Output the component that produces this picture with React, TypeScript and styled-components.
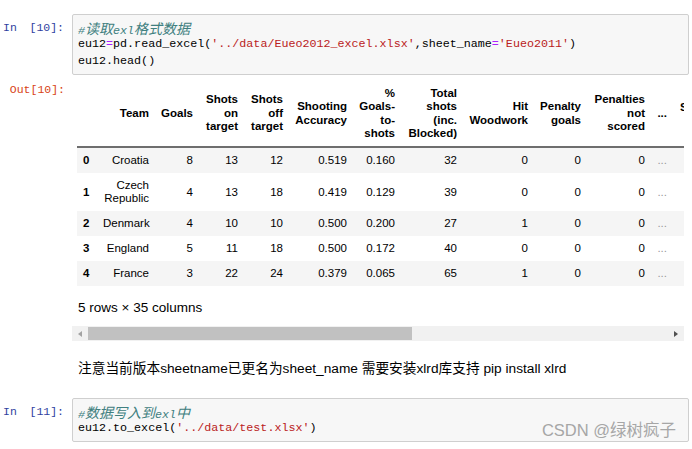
import styled, { createGlobalStyle } from "styled-components";

const GlobalStyle = createGlobalStyle`
  html, body {
    margin: 0;
    padding: 0;
    background: #ffffff;
  }
  body {
    width: 692px;
    height: 449px;
    overflow: hidden;
  }
`;

const MONO = `"Liberation Mono", "Noto Sans CJK SC", monospace`;
const SANS = `"Liberation Sans", Arial, "Noto Sans CJK SC", sans-serif`;

type Cell = string | string[];

const columns: { label: string[]; width: number }[] = [
  { label: [], width: 20 },
  { label: ["Team"], width: 58 },
  { label: ["Goals"], width: 44 },
  { label: ["Shots", "on", "target"], width: 45 },
  { label: ["Shots", "off", "target"], width: 45 },
  { label: ["Shooting", "Accuracy"], width: 64 },
  { label: ["%", "Goals-", "to-", "shots"], width: 48 },
  { label: ["Total", "shots", "(inc.", "Blocked)"], width: 62 },
  { label: ["Hit", "Woodwork"], width: 71 },
  { label: ["Penalty", "goals"], width: 53 },
  { label: ["Penalties", "not", "scored"], width: 64 },
  { label: ["..."], width: 22 },
  { label: ["S"], width: 39 },
];

// 最后一列被滚动区域截掉，只留表头的首字母
const rows: Cell[][] = [
  ["0", "Croatia", "8", "13", "12", "0.519", "0.160", "32", "0", "0", "0", "...", ""],
  ["1", ["Czech", "Republic"], "4", "13", "18", "0.419", "0.129", "39", "0", "0", "0", "...", ""],
  ["2", "Denmark", "4", "10", "10", "0.500", "0.200", "27", "1", "0", "0", "...", ""],
  ["3", "England", "5", "11", "18", "0.500", "0.172", "40", "0", "0", "0", "...", ""],
  ["4", "France", "3", "22", "24", "0.379", "0.065", "65", "1", "0", "0", "...", ""],
];

const lines = (value: Cell) =>
  Array.isArray(value)
    ? value.map((part, i) => (
        <span key={part}>
          {i > 0 && <br />}
          {part}
        </span>
      ))
    : value;

const App = () => {
  return (
    <Page>
      <GlobalStyle />

      {/* 第一个代码单元 */}
      <CellRow>
        <Prompt $kind="in">
          <span>In</span>
          <span>[10]:</span>
        </Prompt>
        <InputBox>
          <CodeLine>
            <Comment>
              #<Cjk>读取</Cjk>exl<Cjk>格式数据</Cjk>
            </Comment>
          </CodeLine>
          <CodeLine>
            eu12<Op>=</Op>pd.read_excel(<Str>'../data/Eueo2012_excel.xlsx'</Str>
            ,sheet_name<Op>=</Op>
            <Str>'Eueo2011'</Str>)
          </CodeLine>
          <CodeLine>eu12.head()</CodeLine>
        </InputBox>
      </CellRow>

      {/* 输出 */}
      <OutputRow>
        <Prompt $kind="out">Out[10]:</Prompt>
        <OutputArea>
          <TableClip>
            <Table>
              <colgroup>
                {columns.map((col, i) => (
                  <col key={i} style={{ width: col.width }} />
                ))}
              </colgroup>
              <thead>
                <tr>
                  {columns.map((col, i) => (
                    <HeadCell key={i} $clipped={i === columns.length - 1}>
                      {lines(col.label)}
                    </HeadCell>
                  ))}
                </tr>
              </thead>
              <tbody>
                {rows.map((row, r) => (
                  <BodyRow key={r} $striped={r % 2 === 0}>
                    {row.map((value, c) =>
                      c === 0 ? (
                        <IndexCell key={c}>{value}</IndexCell>
                      ) : (
                        <DataCell key={c} $muted={value === "..."}>
                          {lines(value)}
                        </DataCell>
                      )
                    )}
                  </BodyRow>
                ))}
              </tbody>
            </Table>
          </TableClip>
          <Summary>5 rows × 35 columns</Summary>
          <ScrollBar>
            <ArrowButton>
              <Arrow $dir="left" />
            </ArrowButton>
            <Track>
              <Thumb />
            </Track>
            <ArrowButton>
              <Arrow $dir="right" />
            </ArrowButton>
          </ScrollBar>
        </OutputArea>
      </OutputRow>

      <Markdown>
        注意当前版本sheetname已更名为sheet_name 需要安装xlrd库支持 pip install xlrd
      </Markdown>

      {/* 第二个代码单元 */}
      <CellRow $gap={20}>
        <Prompt $kind="in">
          <span>In</span>
          <span>[11]:</span>
        </Prompt>
        <InputBox>
          <CodeLine>
            <Comment>
              #<Cjk>数据写入到</Cjk>exl<Cjk>中</Cjk>
            </Comment>
          </CodeLine>
          <CodeLine>
            eu12.to_excel(<Str>'../data/test.xlsx'</Str>)
          </CodeLine>
        </InputBox>
      </CellRow>

      <Watermark>CSDN @绿树疯子</Watermark>
    </Page>
  );
};

const Page = styled.div`
  position: relative;
  width: 692px;
  height: 449px;
  padding-top: 14px;
  box-sizing: border-box;
  background: #ffffff;
`;

const CellRow = styled.div<{ $gap?: number }>`
  display: flex;
  align-items: flex-start;
  margin-top: ${({ $gap }) => $gap ?? 0}px;
`;

const Prompt = styled.div<{ $kind: "in" | "out" }>`
  display: flex;
  justify-content: ${({ $kind }) => ($kind === "in" ? "space-between" : "flex-end")};
  flex: 0 0 auto;
  width: 72px;
  box-sizing: border-box;
  padding: ${({ $kind }) => ($kind === "in" ? "5.5px 8px 0 3px" : "1.7px 7px 0 0")};

  font-family: ${MONO};
  font-size: 11.5px;
  line-height: 16.7px;
  white-space: pre;
  color: ${({ $kind }) => ($kind === "in" ? "#303f9f" : "#d84315")};
`;

const InputBox = styled.div`
  width: 617px;
  box-sizing: border-box;
  padding: 4.5px 5px;
  border: 1px solid #cfcfcf;
  border-radius: 2px;
  background: #f7f7f7;
`;

const CodeLine = styled.div`
  height: 16.7px;
  font-family: ${MONO};
  font-size: 11.7px;
  line-height: 16.7px;
  white-space: pre;
  color: #000000;
`;

const Comment = styled.span`
  font-style: italic;
  color: #408080;
`;

const Cjk = styled.span`
  font-family: "Noto Sans CJK SC", sans-serif;
  font-size: 14px;
`;

const Op = styled.span`
  color: #aa22ff;
`;

const Str = styled.span`
  color: #ba2121;
`;

const OutputRow = styled.div`
  display: flex;
  align-items: flex-start;
  margin-top: 5px;
`;

const OutputArea = styled.div`
  width: 612px;
  padding-top: 1px;
`;

const TableClip = styled.div`
  overflow: hidden;
  padding-left: 5px;
`;

const Table = styled.table`
  width: 635px;
  table-layout: fixed;
  border-collapse: collapse;
  border-spacing: 0;
  font-family: ${SANS};
  font-size: 11.5px;
  color: #000000;
`;

const HeadCell = styled.th<{ $clipped?: boolean }>`
  padding: ${({ $clipped }) => ($clipped ? "5.5px 6px 5.5px 7px" : "5.5px 6px")};
  line-height: 13.5px;
  text-align: ${({ $clipped }) => ($clipped ? "left" : "right")};
  vertical-align: ${({ $clipped }) => ($clipped ? "top" : "middle")};
  white-space: nowrap;
  font-weight: 700;
  border-bottom: 2px solid #6e6e6e;
  ${({ $clipped }) => ($clipped ? "padding-top: 20px;" : "")}
`;

const BodyRow = styled.tr<{ $striped: boolean }>`
  background: ${({ $striped }) => ($striped ? "#f5f5f5" : "#ffffff")};
`;

const IndexCell = styled.th`
  padding: 6px;
  line-height: 13px;
  text-align: left;
  vertical-align: middle;
  font-weight: 700;
`;

const DataCell = styled.td<{ $muted: boolean }>`
  padding: 6px;
  line-height: 13px;
  text-align: right;
  vertical-align: middle;
  white-space: nowrap;
  color: ${({ $muted }) => ($muted ? "#9a9a9a" : "#000000")};
`;

const Summary = styled.div`
  margin-top: 13px;
  padding-left: 6px;
  font-family: ${SANS};
  font-size: 13.5px;
  line-height: 18px;
  color: #000000;
`;

const ScrollBar = styled.div`
  display: flex;
  height: 15px;
  margin-top: 9px;
  background: #f1f1f1;
`;

const ArrowButton = styled.div`
  display: flex;
  align-items: center;
  justify-content: center;
  width: 16px;
`;

const Arrow = styled.span<{ $dir: "left" | "right" }>`
  width: 0;
  height: 0;
  border-top: 3.5px solid transparent;
  border-bottom: 3.5px solid transparent;
  ${({ $dir }) =>
    $dir === "left"
      ? "border-right: 4px solid #a3a3a3;"
      : "border-left: 4px solid #505050;"}
`;

const Track = styled.div`
  flex: 1;
  display: flex;
  align-items: center;
`;

const Thumb = styled.div`
  width: 324px;
  height: 13px;
  background: #c1c1c1;
`;

const Markdown = styled.div`
  margin-top: 19px;
  padding-left: 78px;
  font-family: ${SANS};
  font-size: 13.7px;
  line-height: 18px;
  color: #000000;
`;

const Watermark = styled.div`
  position: absolute;
  right: 16px;
  top: 420px;
  font-family: ${SANS};
  font-size: 16.5px;
  line-height: 20px;
  color: #a6a6a6;
`;

export default App;
